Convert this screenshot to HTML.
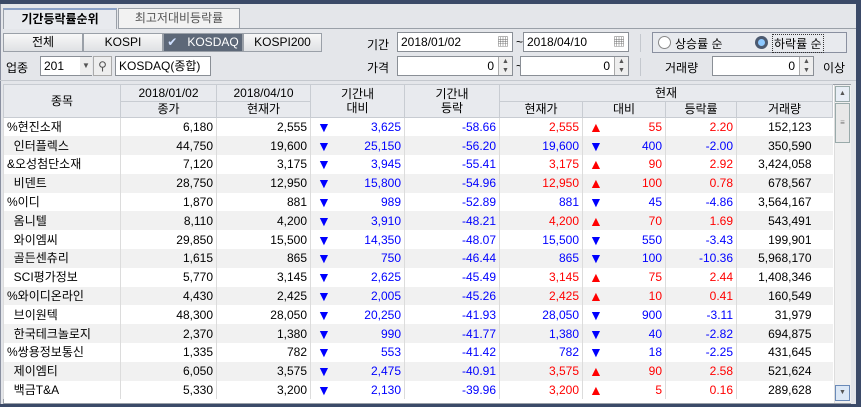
<!DOCTYPE html><html><head><meta charset="utf-8"><style>
*{box-sizing:border-box;margin:0;padding:0}
body{width:861px;height:407px;overflow:hidden;background:#e4e6ea;font-family:"Liberation Sans","Noto Sans CJK KR","NanumGothic",sans-serif;font-size:12px;color:#000;position:relative}
.a{position:absolute}
.top{left:0;top:0;width:861px;height:4px;background:#3b4a68}
.rb{left:856px;top:0;width:5px;height:407px;background:#3b4a68}
.bb{left:0;top:404px;width:861px;height:3px;background:#3b4a68}
.tab{top:8px;height:21px;border:1px solid #9aa0a8;text-align:center;line-height:19px}
.btn{top:33px;height:19px;border:1px solid #9aa0a8;background:linear-gradient(#f8f8f8,#dfe1e4);text-align:center;line-height:17px}
.inp{background:#fff;border:1px solid #8a8f96;height:20px;line-height:18px;padding:0 3px}
.spin{width:14px;height:18px;border-left:1px solid #aaa;background:#eee;font-size:7px;line-height:9px;text-align:center;color:#555}
table{border-collapse:collapse;position:absolute;left:3px;top:84px;table-layout:fixed;font-size:12px}
td{height:18.8px;line-height:18px;padding:0 3px;white-space:nowrap;overflow:hidden;border-left:1px solid #dcdcdc}
th{font-weight:normal;background:#e8eaee;border:1px solid #c8ccd2;height:16.5px;line-height:14px}
tr.o td{background:#fff}tr.e td{background:#f1f1f1}
.r{text-align:right}.red{color:#f00}.blu{color:#00f}
.ar{float:left;margin-left:3px;font-size:14px;line-height:18px}
.dn{color:#00f}.up{color:#f00}
</style></head><body>
<div class="a top"></div><div class="a rb"></div><div class="a bb"></div>
<div class="a" style="left:0;top:4px;width:856px;height:400px;border-left:1px solid #8a90a0"></div>
<div class="a tab" style="left:3px;width:114px;background:#e8eaee;border-bottom:none;font-weight:bold;border-top:2px solid #8aa0c6">기간등락률순위</div>
<div class="a tab" style="left:118px;width:122px;background:#f2f2f2;color:#555">최고저대비등락률</div>
<div class="a" style="left:240px;top:28px;width:616px;border-top:1px solid #9aa0a8"></div>
<div class="a btn" style="left:3px;width:80px">전체</div>
<div class="a btn" style="left:83px;width:80px">KOSPI</div>
<div class="a btn" style="left:163px;width:80px;background:#5d6878;color:#fff"><span style="color:#cfe0ff">✔</span>&nbsp;&nbsp; KOSDAQ</div>
<div class="a btn" style="left:243px;width:79px">KOSPI200</div>
<div class="a" style="left:367px;top:36px">기간</div>
<div class="a inp" style="left:397px;top:32px;width:116px">2018/01/02<span style="position:absolute;right:3px;top:0;color:#666">▦</span></div>
<div class="a" style="left:516px;top:35px">~</div>
<div class="a inp" style="left:523px;top:32px;width:106px">2018/04/10<span style="position:absolute;right:3px;top:0;color:#666">▦</span></div>
<div class="a" style="left:640px;top:34px;height:18px;border-left:1px solid #c4c8ce"></div>
<div class="a" style="left:652px;top:32px;width:195px;height:21px;border:1px solid #8a90a0;background:#e8eaee"></div>
<div class="a" style="left:658px;top:36px;width:13px;height:13px;border:1px solid #888;border-radius:50%;background:#fff"></div>
<div class="a" style="left:675px;top:35px">상승률 순</div>
<div class="a" style="left:755px;top:36px;width:13px;height:13px;border-radius:50%;background:#4c5a70"><div style="margin:3px;width:7px;height:7px;border-radius:50%;background:#8cc8ff"></div></div>
<div class="a" style="left:772px;top:34px;border:1px dotted #333;padding:0 1px">하락률 순</div>
<div class="a" style="left:6px;top:59px">업종</div>
<div class="a inp" style="left:40px;top:56px;width:52px">201</div>
<div class="a" style="left:80px;top:57px;width:12px;height:18px;background:#eee;font-size:8px;line-height:18px;text-align:center;color:#555">▼</div>
<div class="a" style="left:93px;top:56px;width:19px;height:20px;border:1px solid #aaa;background:#eee;text-align:center;line-height:18px;color:#555">⚲</div>
<div class="a inp" style="left:115px;top:56px;width:96px">KOSDAQ(종합)</div>
<div class="a" style="left:367px;top:59px">가격</div>
<div class="a inp" style="left:397px;top:56px;width:116px;text-align:right;padding-right:18px">0<div class="a spin" style="right:0;top:0">▲<br>▼</div></div>
<div class="a" style="left:516px;top:59px">~</div>
<div class="a inp" style="left:520px;top:56px;width:109px;text-align:right;padding-right:18px">0<div class="a spin" style="right:0;top:0">▲<br>▼</div></div>
<div class="a" style="left:640px;top:58px;height:18px;border-left:1px solid #c4c8ce"></div>
<div class="a" style="left:665px;top:59px">거래량</div>
<div class="a inp" style="left:712px;top:56px;width:102px;text-align:right;padding-right:18px">0<div class="a spin" style="right:0;top:0">▲<br>▼</div></div>
<div class="a" style="left:823px;top:59px">이상</div>
<div class="a" style="left:0;top:80px;width:856px;border-top:1px solid #c4c8ce"></div>
<div class="a" style="left:3px;top:84px;width:848px;height:320px;border:1px solid #9aa0a8;background:#fff"></div>
<table>
<colgroup><col style="width:117px"><col style="width:96px"><col style="width:94px"><col style="width:94px"><col style="width:95px"><col style="width:83px"><col style="width:83px"><col style="width:71px"><col style="width:96px"></colgroup>
<tr><th rowspan="2">종목</th><th>2018/01/02</th><th>2018/04/10</th><th rowspan="2" style="line-height:14px">기간내<br>대비</th><th rowspan="2">기간내<br>등락</th><th colspan="4">현재</th></tr>
<tr><th>종가</th><th>현재가</th><th>현재가</th><th>대비</th><th>등락률</th><th>거래량</th></tr>
<tbody id="b"></tbody>
</table>
<div class="a" style="left:834px;top:85px;width:17px;height:318px;background:#f0f0f0;border-left:1px solid #ddd"></div>
<div class="a" style="left:835px;top:86px;width:15px;height:16px;border:1px solid #9aa;background:#e8eef6;font-size:7px;text-align:center;line-height:14px;color:#555">▲</div>
<div class="a" style="left:835px;top:103px;width:15px;height:40px;border:1px solid #9aa;background:#e8e8e8;font-size:8px;text-align:center;line-height:38px;color:#777">≡</div>
<div class="a" style="left:835px;top:385px;width:15px;height:16px;border:1px solid #6a8ab8;background:#dce8f6;font-size:7px;text-align:center;line-height:14px;color:#555">▼</div>
<script>
var d=[["%현진소재","6,180","2,555","3,625","-58.66","2,555",1,"55","2.20","152,123"],
["&nbsp;&nbsp;인터플렉스","44,750","19,600","25,150","-56.20","19,600",0,"400","-2.00","350,590"],
["&오성첨단소재","7,120","3,175","3,945","-55.41","3,175",1,"90","2.92","3,424,058"],
["&nbsp;&nbsp;비덴트","28,750","12,950","15,800","-54.96","12,950",1,"100","0.78","678,567"],
["%이디","1,870","881","989","-52.89","881",0,"45","-4.86","3,564,167"],
["&nbsp;&nbsp;옴니텔","8,110","4,200","3,910","-48.21","4,200",1,"70","1.69","543,491"],
["&nbsp;&nbsp;와이엠씨","29,850","15,500","14,350","-48.07","15,500",0,"550","-3.43","199,901"],
["&nbsp;&nbsp;골든센츄리","1,615","865","750","-46.44","865",0,"100","-10.36","5,968,170"],
["&nbsp;&nbsp;SCI평가정보","5,770","3,145","2,625","-45.49","3,145",1,"75","2.44","1,408,346"],
["%와이디온라인","4,430","2,425","2,005","-45.26","2,425",1,"10","0.41","160,549"],
["&nbsp;&nbsp;브이원텍","48,300","28,050","20,250","-41.93","28,050",0,"900","-3.11","31,979"],
["&nbsp;&nbsp;한국테크놀로지","2,370","1,380","990","-41.77","1,380",0,"40","-2.82","694,875"],
["%쌍용정보통신","1,335","782","553","-41.42","782",0,"18","-2.25","431,645"],
["&nbsp;&nbsp;제이엠티","6,050","3,575","2,475","-40.91","3,575",1,"90","2.58","521,624"],
["&nbsp;&nbsp;백금T&A","5,330","3,200","2,130","-39.96","3,200",1,"5","0.16","289,628"]];
var h="";d.forEach(function(r,i){var c=r[6]?"red":"blu",ar=r[6]?'<span class="ar up">▲</span>':'<span class="ar dn">▼</span>';
h+='<tr class="'+(i%2?"e":"o")+'"><td>'+r[0]+'</td><td class="r">'+r[1]+'</td><td class="r">'+r[2]+'</td><td class="r blu"><span class="ar dn">▼</span>'+r[3]+'</td><td class="r blu">'+r[4]+'</td><td class="r '+c+'">'+r[5]+'</td><td class="r '+c+'">'+ar+r[7]+'</td><td class="r '+c+'">'+r[8]+'</td><td class="r" style="padding-right:21px">'+r[9]+'</td></tr>';});
document.getElementById("b").innerHTML=h;
</script>
</body></html>
